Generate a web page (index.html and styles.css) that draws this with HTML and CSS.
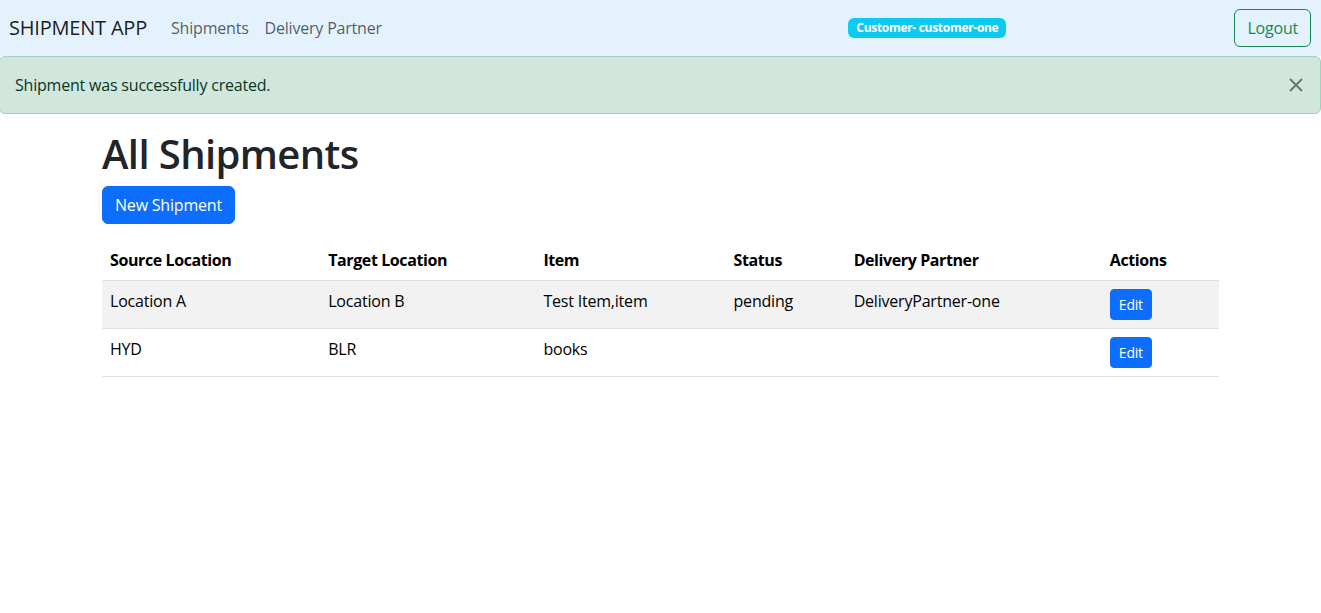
FILE: index.html
```html
<!DOCTYPE html>
<html lang="en">
<head>
<meta charset="utf-8">
<title>Shipment App</title>
<link rel="stylesheet" href="styles.css">
</head>
<body>
<nav class="navbar">
  <a class="brand" href="#">SHIPMENT APP</a>
  <ul class="nav-links">
    <li><a href="#">Shipments</a></li>
    <li><a href="#">Delivery Partner</a></li>
  </ul>
  <span class="badge">Customer- customer-one</span>
  <button class="btn-logout">Logout</button>
</nav>
<div class="alert">
  <span>Shipment was successfully created.</span>
  <button class="close" aria-label="Close">
    <svg width="16" height="16" viewBox="0 0 16 16"><path d="M2 2L14 14M14 2L2 14" stroke="#000" stroke-width="1.8" fill="none"/></svg>
  </button>
</div>
<main class="container">
  <h1>All Shipments</h1>
  <button class="btn-primary">New Shipment</button>
  <table class="table">
    <thead>
      <tr>
        <th class="c1">Source Location</th>
        <th class="c2">Target Location</th>
        <th class="c3">Item</th>
        <th class="c4">Status</th>
        <th class="c5">Delivery Partner</th>
        <th class="c6">Actions</th>
      </tr>
    </thead>
    <tbody>
      <tr class="striped">
        <td>Location A</td>
        <td>Location B</td>
        <td>Test Item,item</td>
        <td>pending</td>
        <td>DeliveryPartner-one</td>
        <td><button class="btn-sm">Edit</button></td>
      </tr>
      <tr>
        <td>HYD</td>
        <td>BLR</td>
        <td>books</td>
        <td></td>
        <td></td>
        <td><button class="btn-sm">Edit</button></td>
      </tr>
    </tbody>
  </table>
</main>
</body>
</html>
```
FILE: styles.css
```css
* { box-sizing: border-box; }
body {
  margin: 0;
  font-family: "Open Sans", "Noto Sans", sans-serif;
  font-size: 16px;
  line-height: 1.5;
  letter-spacing: -0.2px;
  color: #212529;
  background: #fff;
}
.navbar {
  display: flex;
  align-items: center;
  height: 56px;
  padding: 0 10px 0 9px;
  background: #e3f2fd;
}
.brand {
  font-size: 20px;
  color: rgba(0,0,0,.9);
  text-decoration: none;
  margin-right: 16px;
  line-height: 30px;
}
.nav-links {
  display: flex;
  list-style: none;
  margin: 0;
  padding: 0;
  flex: 1;
}
.nav-links a {
  display: block;
  padding: 8px;
  color: rgba(0,0,0,.65);
  text-decoration: none;
}
.badge {
  background: #0dcaf0;
  color: #fff;
  font-size: 12px;
  font-weight: 700;
  letter-spacing: -0.3px;
  line-height: 1;
  padding: 4px 8px;
  border-radius: 6px;
  margin-right: 228px;
}
.btn-logout {
  font: inherit;
  letter-spacing: inherit;
  color: #198754;
  background: transparent;
  border: 1px solid #198754;
  border-radius: 6px;
  padding: 6px 12px;
  line-height: 24px;
}
.alert {
  position: relative;
  background: #d1e7dd;
  border: 1px solid #a3cfbb;
  border-radius: 6px;
  color: #0a3622;
  padding: 16px 15px;
  margin: 0 0 16px -1px;
  width: calc(100% + 1px);
}
.close {
  position: absolute;
  top: 0;
  right: 0;
  padding: 20px 16px;
  border: 0;
  background: transparent;
  opacity: .5;
  line-height: 0;
}
.container {
  max-width: 1141px;
  margin: 0 auto;
  padding: 0 12px;
}
h1 {
  font-size: 40px;
  font-weight: 600;
  letter-spacing: -0.6px;
  line-height: 1.2;
  margin: 0 0 8px;
}
.btn-primary {
  font: inherit;
  letter-spacing: inherit;
  color: #fff;
  background: #0d6efd;
  border: 1px solid #0d6efd;
  border-radius: 6px;
  padding: 6px 12px;
  line-height: 24px;
}
.table {
  width: 100%;
  border-collapse: collapse;
  margin-top: 16px;
  color: #000;
}
.table th, .table td {
  text-align: left;
  vertical-align: top;
  padding: 8px;
  border-bottom: 1px solid #dee2e6;
}
.table th { font-weight: 700; letter-spacing: -0.4px; }
.c1 { width: 218px; }
.c2 { width: 215px; }
.c3 { width: 190px; }
.c4 { width: 120px; }
.c5 { width: 256px; }
.c6 { width: 117px; }
.striped td { background: #f2f2f2; }
.btn-sm {
  font: inherit;
  letter-spacing: inherit;
  font-size: 14px;
  line-height: 21px;
  color: #fff;
  background: #0d6efd;
  border: 1px solid #0d6efd;
  border-radius: 4px;
  padding: 4px 8px;
}
```
